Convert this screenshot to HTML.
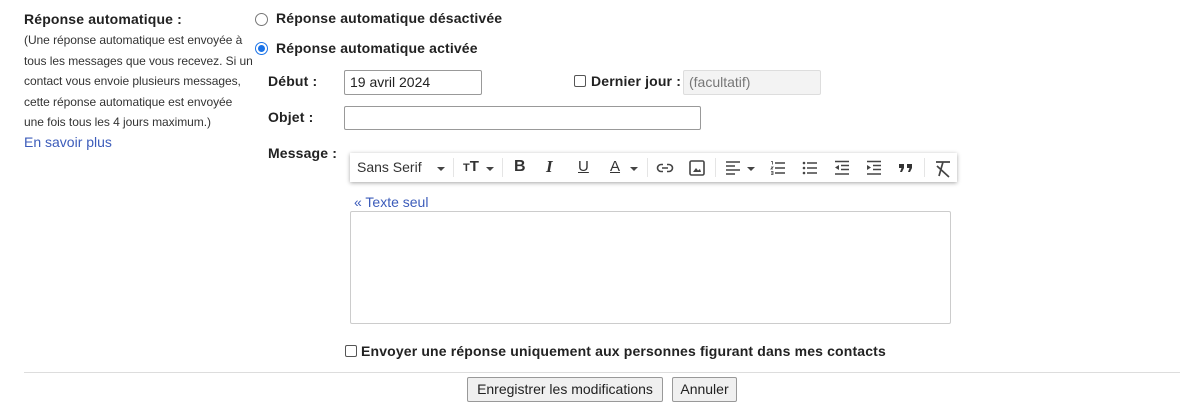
<!DOCTYPE html>
<html><head><meta charset="utf-8"><style>
body{margin:0;width:1200px;height:418px;background:#fff;font-family:"Liberation Sans",Arial,sans-serif;color:#222;position:relative;overflow:hidden}
.a{position:absolute;white-space:nowrap}
.b{font-weight:bold;font-size:14px;letter-spacing:0.15px}
.d{font-size:12px;color:#333;line-height:20.5px;letter-spacing:-0.05px}
.in{position:absolute;border:1px solid #999;border-radius:2px;box-sizing:border-box;background:#fff;font-size:14px;padding:3px 5px}
.radio{position:absolute;width:11px;height:11px;border:1px solid #777;border-radius:50%}
.cb{position:absolute;width:10px;height:10px;border:1px solid #555;border-radius:2px}
.tb{position:absolute;left:350px;top:153px;width:607px;height:29px;background:#fff;box-shadow:0 1px 4px rgba(0,0,0,.35);font-size:14px;color:#333}
.tb span{position:absolute;top:6px}
.tb svg{position:absolute;top:7px}
.btn{position:absolute;border:1px solid #999;border-radius:2px;background:#f0f0f0;font-size:14px;box-sizing:border-box;text-align:center;line-height:22px}
</style></head><body>
<div class="a b" style="left:24px;top:11px">Réponse automatique :</div>
<div class="a d" style="left:24px;top:30px">(Une réponse automatique est envoyée à<br>tous les messages que vous recevez. Si un<br>contact vous envoie plusieurs messages,<br>cette réponse automatique est envoyée<br>une fois tous les 4 jours maximum.)</div>
<div class="a" style="left:24px;top:134px;font-size:14px;color:#3c5cba">En savoir plus</div>

<div class="radio" style="left:255px;top:13px"></div>
<div class="a b" style="left:276px;top:10px">Réponse automatique désactivée</div>
<div class="radio" style="left:255px;top:42px;border-color:#1a73e8"><div style="position:absolute;left:2px;top:2px;width:7px;height:7px;border-radius:50%;background:#1a73e8"></div></div>
<div class="a b" style="left:276px;top:40px">Réponse automatique activée</div>

<div class="a b" style="left:268px;top:73px">Début :</div>
<div class="in" style="left:344px;top:70px;width:138px;height:25px">19 avril 2024</div>
<div class="cb" style="left:574px;top:75px"></div>
<div class="a b" style="left:591px;top:73px">Dernier jour :</div>
<div class="in" style="left:683px;top:70px;width:138px;height:25px;background:#f3f3f3;border-color:#ddd;color:#777">(facultatif)</div>

<div class="a b" style="left:268px;top:109px">Objet :</div>
<div class="in" style="left:344px;top:106px;width:357px;height:24px"></div>

<div class="a b" style="left:268px;top:145px">Message :</div>
<div class="tb">
<span style="left:7px">Sans Serif</span>
<svg style="left:87px" width="8" height="16"><path d="M0 7h8l-4 4z" fill="#444"/></svg>
<div style="position:absolute;left:103px;top:5px;width:1px;height:19px;background:#e5e5e5"></div>
<span style="left:113px;font-weight:bold;font-size:15px;top:5px"><small style="font-size:11px">T</small>T</span>
<svg style="left:136px" width="8" height="16"><path d="M0 7h8l-4 4z" fill="#444"/></svg>
<div style="position:absolute;left:152px;top:5px;width:1px;height:19px;background:#e5e5e5"></div>
<span style="left:164px;font-weight:bold;font-size:16px;top:5px">B</span>
<span style="left:196px;font-style:italic;font-weight:bold;font-family:'Liberation Serif';font-size:17px;top:4px">I</span>
<span style="left:228px;text-decoration:underline;font-size:15px;top:5px">U</span>
<span style="left:260px;text-decoration:underline;font-size:15px;top:5px">A</span>
<svg style="left:280px" width="8" height="16"><path d="M0 7h8l-4 4z" fill="#444"/></svg>
<div style="position:absolute;left:297px;top:5px;width:1px;height:19px;background:#e5e5e5"></div>
<svg style="left:306px" width="18" height="16"><path d="M7 4.5H5a3.5 3.5 0 0 0 0 7h2M11 4.5h2a3.5 3.5 0 0 1 0 7h-2M6 8h6" stroke="#444" stroke-width="1.6" fill="none"/></svg>
<svg style="left:339px" width="16" height="16"><rect x="1" y="1" width="14" height="14" rx="1.5" stroke="#444" stroke-width="1.6" fill="none"/><path d="M4 12l3-4 2 2.5 2-1.5 1 3z" fill="#444"/></svg>
<div style="position:absolute;left:365px;top:5px;width:1px;height:19px;background:#e5e5e5"></div>
<svg style="left:375px" width="16" height="16"><path d="M1 2h14M1 6h9M1 10h14M1 14h9" stroke="#444" stroke-width="1.6"/></svg>
<svg style="left:397px" width="8" height="16"><path d="M0 7h8l-4 4z" fill="#444"/></svg>
<svg style="left:420px" width="16" height="16"><path d="M5 3h10M5 8h10M5 13h10" stroke="#444" stroke-width="1.5"/><path d="M1 1.5h1.5v3M1 7h2l-2 2h2M1 11.5h2v3h-2M1 13h2" stroke="#444" stroke-width="0.8" fill="none"/></svg>
<svg style="left:452px" width="16" height="16"><path d="M5 3h10M5 8h10M5 13h10" stroke="#444" stroke-width="1.5"/><circle cx="2" cy="3" r="1.3" fill="#444"/><circle cx="2" cy="8" r="1.3" fill="#444"/><circle cx="2" cy="13" r="1.3" fill="#444"/></svg>
<svg style="left:484px" width="16" height="16"><path d="M1 1.5h14M7 5.5h8M7 9.5h8M1 14h14" stroke="#444" stroke-width="1.5"/><path d="M5 5v5L1 7.5z" fill="#444"/></svg>
<svg style="left:516px" width="16" height="16"><path d="M1 1.5h14M7 5.5h8M7 9.5h8M1 14h14" stroke="#444" stroke-width="1.5"/><path d="M1 5v5l4-2.5z" fill="#444"/></svg>
<svg style="left:548px" width="16" height="16"><path d="M1 4h5v4l-2 4H2l1.5-4H1zM9 4h5v4l-2 4h-2l1.5-4H9z" fill="#333"/></svg>
<div style="position:absolute;left:574px;top:5px;width:1px;height:19px;background:#e5e5e5"></div>
<svg style="left:584px" width="18" height="18" style="top:6px"><path d="M2 2h14M9 2l-4 14M3 6l12 11" stroke="#444" stroke-width="1.7" fill="none"/></svg>
</div>
<div class="a" style="left:354px;top:194px;font-size:14px;color:#3c5cba">« Texte seul</div>
<div class="in" style="left:350px;top:211px;width:601px;height:113px;border-color:#ccc"></div>

<div class="cb" style="left:345px;top:345px"></div>
<div class="a b" style="left:361px;top:343px">Envoyer une réponse uniquement aux personnes figurant dans mes contacts</div>
<div class="a" style="left:24px;top:372px;width:1156px;height:1px;background:#ddd"></div>
<div class="btn" style="left:467px;top:377px;width:196px;height:25px">Enregistrer les modifications</div>
<div class="btn" style="left:672px;top:377px;width:65px;height:25px">Annuler</div>
</body></html>
